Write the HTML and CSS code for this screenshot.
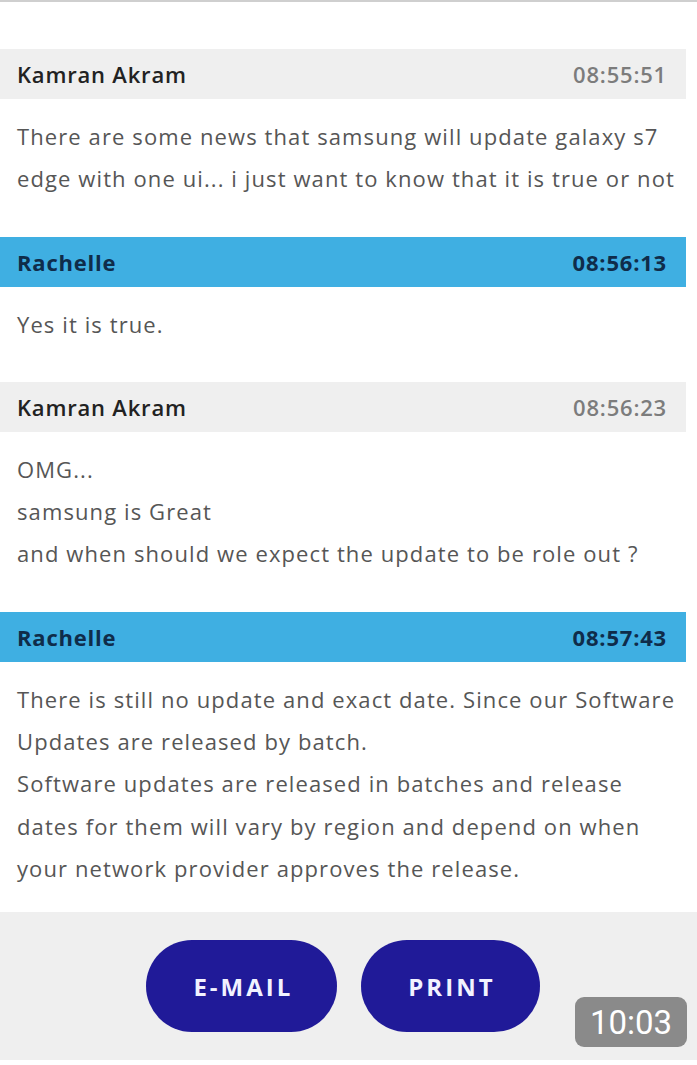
FILE: index.html
```html
<!DOCTYPE html>
<html>
<head>
<meta charset="utf-8">
<link rel="stylesheet" href="styles.css">
</head>
<body>
<div class="topline"></div>
<main class="chat">
  <section class="msg">
    <div class="head head-user"><span class="name">Kamran Akram</span><span class="time">08:55:51</span></div>
    <div class="body">There are some news that samsung will update galaxy s7<br>edge with one ui... i just want to know that it is true or not</div>
  </section>
  <section class="msg">
    <div class="head head-agent"><span class="name">Rachelle</span><span class="time">08:56:13</span></div>
    <div class="body">Yes it is true.</div>
  </section>
  <section class="msg">
    <div class="head head-user"><span class="name">Kamran Akram</span><span class="time">08:56:23</span></div>
    <div class="body">OMG...<br>samsung is Great<br>and when should we expect the update to be role out ?</div>
  </section>
  <section class="msg msg-last">
    <div class="head head-agent"><span class="name">Rachelle</span><span class="time">08:57:43</span></div>
    <div class="body">There is still no update and exact date. Since our Software<br>Updates are released by batch.<br>Software updates are released in batches and release<br>dates for them will vary by region and depend on when<br>your network provider approves the release.</div>
  </section>
</main>
<footer class="actions">
  <button class="btn">E-MAIL</button>
  <button class="btn">PRINT</button>
</footer>
<div class="clock">10:03</div>
</body>
</html>
```
FILE: styles.css
```css
html, body { margin: 0; padding: 0; background: #ffffff; }
body { position: relative; width: 697px; min-height: 1065px; font-family: "Open Sans", "Noto Sans", sans-serif; }
.topline { height: 2px; background: #cfcfcf; margin-bottom: 47px; }
.chat { width: 686px; }
.head { height: 50px; display: flex; align-items: center; justify-content: space-between; padding: 0 19px 0 17px; font-size: 22px; letter-spacing: 0.8px; }
.head-user { background: #efefef; }
.head-user .name { color: #222222; font-weight: 600; }
.head-user .time { color: #7c7c7c; font-weight: 600; }
.head-agent { background: #3fafe2; color: #0f2c4a; font-weight: 700; }
.body { padding: 16px 8px 37px 17px; font-size: 22px; line-height: 42.3px; color: #565656; letter-spacing: 1.1px; white-space: nowrap; }
.msg-last .body { padding-bottom: 23px; }
.actions { background: #efefef; height: 148px; display: flex; justify-content: center; align-items: center; gap: 24px; width: 686px; padding-right: 11px; }
.btn { height: 92px; border: none; border-radius: 46px; background: #201a98; color: #f2f2ff; font-family: "Open Sans", sans-serif; font-weight: 700; font-size: 24px; letter-spacing: 3px; padding: 0 44px 0 47px; }
.clock { position: absolute; left: 575px; top: 997px; width: 112px; height: 50px; border-radius: 9px; background: #8a8a8a; color: #ffffff; font-family: Roboto, sans-serif; font-size: 33px; display: flex; align-items: center; justify-content: center; }
```
